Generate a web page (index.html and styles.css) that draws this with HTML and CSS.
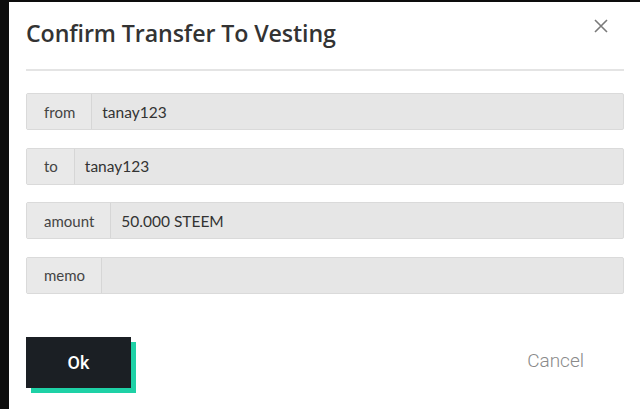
FILE: index.html
```html
<!DOCTYPE html>
<html>
<head>
<meta charset="utf-8">
<link rel="stylesheet" href="styles.css">
</head>
<body>
<div class="modal">
  <div class="header">
    <h1 class="title">Confirm Transfer To Vesting</h1>
    <button class="close" aria-label="close">
      <svg width="14" height="14" viewBox="0 0 14 14"><path d="M1 1L13 13M13 1L1 13" stroke="#7a7a7a" stroke-width="1.6" fill="none"/></svg>
    </button>
  </div>
  <div class="rule"></div>
  <div class="fields">
    <div class="row"><span class="label">from</span><span class="value">tanay123</span></div>
    <div class="row"><span class="label">to</span><span class="value">tanay123</span></div>
    <div class="row"><span class="label">amount</span><span class="value">50.000 STEEM</span></div>
    <div class="row"><span class="label">memo</span><span class="value"></span></div>
  </div>
  <div class="actions">
    <button class="ok">Ok</button>
    <button class="cancel">Cancel</button>
  </div>
</div>
</body>
</html>
```
FILE: styles.css
```css
html, body {
  margin: 0;
  padding: 0;
  height: 100%;
}
body {
  background: #0d0d0d;
  display: flex;
  font-family: "Lato", "Noto Sans", sans-serif;
  overflow: hidden;
}
.modal {
  margin: 2px 0 0 9px;
  flex: 1;
  background: #fff;
  padding: 0 16px 0 17px;
  display: flex;
  flex-direction: column;
}
.header {
  display: flex;
  justify-content: space-between;
  align-items: flex-start;
  height: 67px;
}
.title {
  margin: 15px 0 0 0;
  font-family: "Open Sans", sans-serif;
  font-size: 23.2px;
  font-weight: 600;
  color: #333;
  letter-spacing: -0.1px;
}
.close {
  margin: 17px 16px 0 0;
  padding: 0;
  border: 0;
  background: none;
  display: flex;
}
.rule {
  height: 2px;
  background: #e4e4e4;
}
.fields {
  margin-top: 22px;
  display: flex;
  flex-direction: column;
  gap: 17.5px;
}
.row {
  display: flex;
  height: 37px;
  border: 1px solid #dadada;
  border-radius: 2px;
  box-sizing: border-box;
  background: #e6e6e6;
}
.label {
  display: flex;
  align-items: center;
  padding: 0 16px 0 17px;
  font-size: 15px;
  color: #444;
  background: #e9e9e9;
  border-right: 1px solid #d6d6d6;
}
.value {
  flex: 1;
  display: flex;
  align-items: center;
  padding-left: 10px;
  font-size: 15.5px;
  color: #333;
}
.actions {
  margin-top: 43px;
  display: flex;
  justify-content: space-between;
  align-items: center;
}
.ok {
  width: 105px;
  height: 51px;
  border: 0;
  background: #1b1f24;
  color: #fff;
  font-family: "Roboto", sans-serif;
  font-weight: 500;
  font-size: 18px;
  box-shadow: 5px 5px 0 0 #1ed1a6;
  padding: 0;
}
.cancel {
  margin: 0 40px 4px 0;
  border: 0;
  background: none;
  font-family: "Roboto", sans-serif;
  font-weight: 300;
  font-size: 19px;
  color: #8a8a8a;
  padding: 0;
}
```
